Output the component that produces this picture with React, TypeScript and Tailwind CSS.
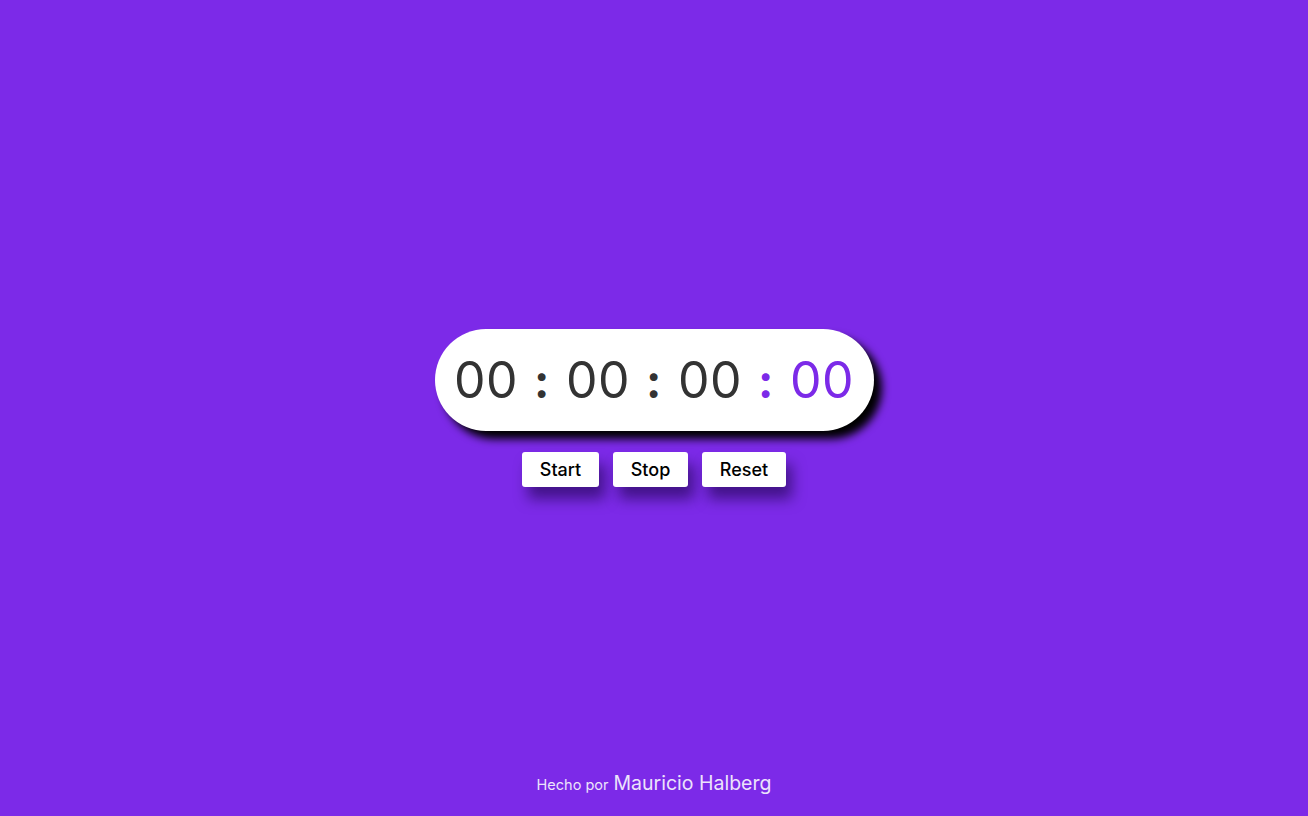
import React, { useEffect, useRef, useState } from 'react'

const pad = (n: number) => String(n).padStart(2, '0')

const Stopwatch: React.FC = () => {
  const [ticks, setTicks] = useState(0)
  const [running, setRunning] = useState(false)
  const timer = useRef<number | null>(null)

  useEffect(() => {
    if (!running) return
    timer.current = window.setInterval(() => setTicks((t) => t + 1), 10)
    return () => {
      if (timer.current) window.clearInterval(timer.current)
    }
  }, [running])

  const cs = ticks % 100
  const s = Math.floor(ticks / 100) % 60
  const m = Math.floor(ticks / 6000) % 60
  const h = Math.floor(ticks / 360000)

  const btn =
    "bg-white rounded-[3px] h-[35px] text-[18px] font-medium text-black shadow-[6px_12px_14px_rgba(20,0,60,0.55)]"
  const colon = "mx-[16px] text-[46px] font-bold relative top-[1px]"

  return (
    <div className="flex flex-col items-center">
      <div className="flex items-center justify-center w-[439px] h-[102px] bg-white rounded-full shadow-[8px_8px_8px_#000] text-[50px] leading-none text-[#333333] tracking-[0.5px]">
        <span>{pad(h)}</span>
        <span className={colon}>:</span>
        <span>{pad(m)}</span>
        <span className={colon}>:</span>
        <span>{pad(s)}</span>
        <span className={`${colon} text-[#7c2ae8]`}>:</span>
        <span className="text-[#7c2ae8]">{pad(cs)}</span>
      </div>
      <div className="flex gap-[14px] mt-[21px]">
        <button className={`${btn} w-[77px]`} onClick={() => setRunning(true)}>Start</button>
        <button className={`${btn} w-[75px]`} onClick={() => setRunning(false)}>Stop</button>
        <button className={`${btn} w-[84px]`} onClick={() => { setRunning(false); setTicks(0) }}>Reset</button>
      </div>
    </div>
  )
}

export default function App() {
  return (
    <div className="h-screen flex flex-col bg-[#7c2ae8] font-['Inter',sans-serif]">
      <div className="h-[46px]" />
      <main className="flex-1 flex items-center justify-center">
        <Stopwatch />
      </main>
      <footer className="h-[46px] flex items-start justify-center text-[#ece3fb] leading-[27px]">
        <p className="flex items-baseline gap-[5px]">
          <span className="text-[14.5px]">Hecho por</span>
          <span className="text-[19.5px]">Mauricio Halberg</span>
        </p>
      </footer>
    </div>
  )
}
